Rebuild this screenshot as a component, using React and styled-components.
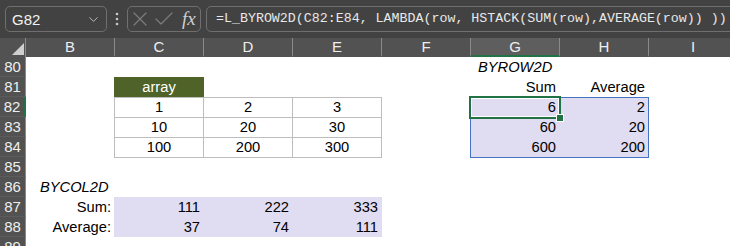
import React from "react"
import styled, { createGlobalStyle, css } from "styled-components"
import { ChevronDown, X, Check } from "lucide-react"

const GlobalStyle = createGlobalStyle`
  body {
    margin: 0;
    background: #ffffff;
    overflow: hidden;
    font-family: "Liberation Sans", Arial, sans-serif;
  }
`

const Window = styled.div`
  width: 730px;
  height: 246px;
  overflow: hidden;
  background: #ffffff;
`

const FormulaBar = styled.div`
  display: flex;
  align-items: flex-start;
  height: 38px;
  box-sizing: border-box;
  padding: 6px 0 0 5px;
  background: #424242;
`

const NameBox = styled.div`
  width: 102px;
  height: 26px;
  box-sizing: border-box;
  border: 1px solid #6f6f6f;
  border-radius: 5px;
  display: flex;
  align-items: center;
  justify-content: space-between;
  padding: 0 5px 0 6px;
  color: #f2f2f2;
  font-size: 15px;
`

const Dots = styled.div`
  width: 20px;
  height: 26px;
  display: flex;
  align-items: center;
  justify-content: center;
`

const FxBox = styled.div`
  width: 74px;
  height: 26px;
  box-sizing: border-box;
  border: 1px solid #6f6f6f;
  border-radius: 5px;
  display: flex;
  align-items: center;
  margin-right: 5px;
  color: #7c7c7c;
`

const FxLabel = styled.span`
  margin-left: 6px;
  font-family: "Liberation Serif", "Times New Roman", serif;
  font-style: italic;
  font-size: 19px;
  color: #cfcfcf;
`

const FormulaInput = styled.div`
  flex: 1;
  height: 26px;
  box-sizing: border-box;
  margin-right: -12px;
  border: 1px solid #6f6f6f;
  border-radius: 5px;
  padding-left: 9px;
  font-family: "Liberation Mono", "DejaVu Sans Mono", monospace;
  font-size: 13.3px;
  line-height: 24px;
  color: #e8e8e8;
  white-space: nowrap;
  overflow: hidden;
`

const Sheet = styled.div`
  display: grid;
  grid-template-columns: 26px repeat(8, 89px);
  grid-template-rows: 19px;
  grid-auto-rows: 20px;
`

const placed = css`
  grid-column: ${p => p.$c};
  grid-row: ${p => p.$r};
`

const Corner = styled.div`
  grid-column: 1;
  grid-row: 1;
  background: #525252;
  border-right: 1px solid #8a8a8a;
  display: flex;
  align-items: flex-end;
  justify-content: flex-end;
  padding: 0 1px 2px 0;
`

const ColHeader = styled.div`
  ${placed}
  box-sizing: border-box;
  background: ${p => (p.$active ? "#5e5e5e" : "#525252")};
  border-right: 1px solid #8a8a8a;
  border-bottom: 2px solid ${p => (p.$active ? "#217346" : "#525252")};
  color: #eeeeee;
  font-size: 15px;
  line-height: 18px;
  text-align: center;
`

const RowHeader = styled.div`
  ${placed}
  box-sizing: border-box;
  background: #525252;
  border-right: ${p => (p.$active ? "2px solid #217346" : "1px solid #8a8a8a")};
  border-bottom: 1px solid #5c5c5c;
  color: #eeeeee;
  font-size: 15px;
  line-height: 19px;
  text-align: center;
`

const Cell = styled.div`
  ${placed}
  box-sizing: border-box;
  min-width: 0;
  padding: 0 4px 0 ${p => p.$indent ?? 4}px;
  font-size: 14.7px;
  line-height: 20px;
  color: ${p => p.$ink || "#000000"};
  text-align: ${p => p.$align || "left"};
  font-style: ${p => (p.$italic ? "italic" : "normal")};
  white-space: nowrap;
  background: ${p => p.$fill || "transparent"};
  ${p => p.$fill && css`margin-left: -1px;`}
  ${p =>
    p.$boxed &&
    css`
      border: 1px solid #bdbdbd;
      margin: 0 0 -1px -1px;
      line-height: 19px;
    `}
`

const SpillOutline = styled.div`
  grid-column: 7 / 9;
  grid-row: 4 / 7;
  margin: 0 0 -1px -1px;
  border: 1px solid #4672c4;
  pointer-events: none;
`

const ActiveCell = styled.div`
  grid-column: 7;
  grid-row: 4;
  position: relative;
  margin: -1px -1px -2px -2px;
  border: 2px solid #217346;
  box-shadow: inset 0 0 0 1px #ffffff;
  pointer-events: none;
`

const FillHandle = styled.div`
  position: absolute;
  right: -4px;
  bottom: -4px;
  width: 6px;
  height: 6px;
  box-sizing: border-box;
  background: #217346;
  outline: 1px solid #ffffff;
`

const OLIVE = "#4f6228"
const LILAC = "#e0dcf1"

const columns = ["B", "C", "D", "E", "F", "G", "H", "I"]
const rows = [80, 81, 82, 83, 84, 85, 86, 87, 88, 89]

const box = v => ({ v, $boxed: true, $align: "center" })
const lilac = v => ({ v, $fill: LILAC, $align: "right" })

const cells = {
  G80: { v: "BYROW2D", $italic: true, $indent: 7 },
  C81: { v: "array", $fill: OLIVE, $ink: "#ffffff", $align: "center" },
  G81: { v: "Sum", $align: "right" },
  H81: { v: "Average", $align: "right" },
  C82: box(1), D82: box(2), E82: box(3),
  C83: box(10), D83: box(20), E83: box(30),
  C84: box(100), D84: box(200), E84: box(300),
  G82: lilac(6), H82: lilac(2),
  G83: lilac(60), H83: lilac(20),
  G84: lilac(600), H84: lilac(200),
  B86: { v: "BYCOL2D", $italic: true, $indent: 14 },
  B87: { v: "Sum:", $align: "right" },
  C87: lilac(111), D87: lilac(222), E87: lilac(333),
  B88: { v: "Average:", $align: "right" },
  C88: lilac(37), D88: lilac(74), E88: lilac(111),
}

const App = () => {
  return (
    <Window>
      <GlobalStyle />
      <FormulaBar>
        <NameBox>
          <span>G82</span>
          <ChevronDown size={15} strokeWidth={1.4} color="#c8c8c8" />
        </NameBox>
        <Dots>
          <svg width="4" height="16" viewBox="0 0 4 16">
            <circle cx="2" cy="3" r="1.3" fill="#c8c8c8" />
            <circle cx="2" cy="8" r="1.3" fill="#c8c8c8" />
            <circle cx="2" cy="13" r="1.3" fill="#c8c8c8" />
          </svg>
        </Dots>
        <FxBox>
          <X size={24} strokeWidth={1.2} />
          <Check size={24} strokeWidth={1.2} />
          <FxLabel>fx</FxLabel>
        </FxBox>
        <FormulaInput>
          =L_BYROW2D(C82:E84, LAMBDA(row, HSTACK(SUM(row),AVERAGE(row)) ))
        </FormulaInput>
      </FormulaBar>

      <Sheet>
        <Corner>
          <svg width="12" height="12" viewBox="0 0 12 12">
            <polygon points="0,12 12,0 12,12" fill="#cfcfcf" />
          </svg>
        </Corner>
        {columns.map((c, ci) => (
          <ColHeader key={c} $c={ci + 2} $r={1} $active={c === "G"}>
            {c}
          </ColHeader>
        ))}

        {rows.map((r, ri) => (
          <React.Fragment key={r}>
            <RowHeader $c={1} $r={ri + 2} $active={r === 82}>
              {r}
            </RowHeader>
            {columns.map((c, ci) => {
              const cell = cells[c + r]
              if (!cell) return null
              const { v, ...look } = cell
              return (
                <Cell key={c} $c={ci + 2} $r={ri + 2} {...look}>
                  {v}
                </Cell>
              )
            })}
          </React.Fragment>
        ))}

        <SpillOutline />
        <ActiveCell>
          <FillHandle />
        </ActiveCell>
      </Sheet>
    </Window>
  )
}

export default App
